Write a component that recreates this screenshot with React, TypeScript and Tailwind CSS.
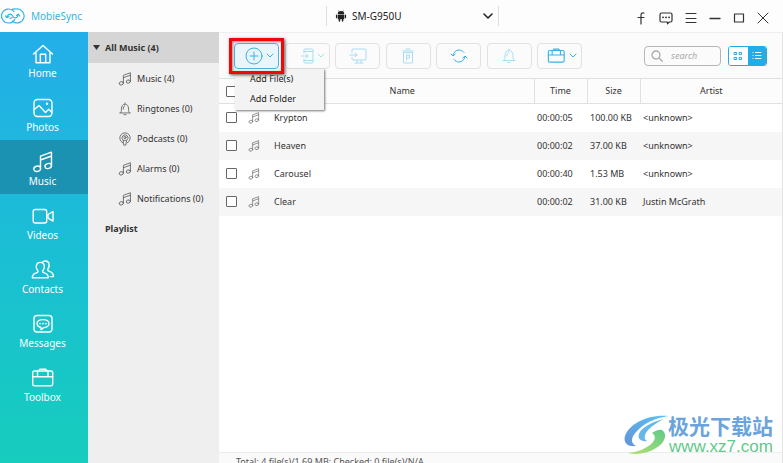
import { useState, type ReactNode } from "react";

type IconProps = { className?: string };

function Svg({
  box,
  className,
  children,
  width = 1,
}: {
  box: string;
  className?: string;
  children: ReactNode;
  width?: number;
}) {
  return (
    <svg
      viewBox={box}
      fill="none"
      stroke="currentColor"
      strokeWidth={width}
      strokeLinecap="round"
      strokeLinejoin="round"
      className={className}
      aria-hidden="true"
    >
      {children}
    </svg>
  );
}

function HomeIcon() {
  return (
    <Svg box="0 0 22 22" width={1.4} className="h-[22px] w-[22px]">
      <path d="M1.500 11 11 2.500l9.500 8.500M4 9.500v10.300h14V9.500M8.300 19.500v-8.300h5.400v8.300" />
    </Svg>
  );
}

function PhotosIcon() {
  return (
    <Svg box="0 0 22 22" width={1.4} className="h-[22px] w-[22px]">
      <rect x="2" y="2.500" width="18" height="17" rx="3.500" />
      <path d="m2.300 12.500 4.700-4 6.500 7 3.200-3.300 3 3" />
      <circle cx="15" cy="6.800" r="1.200" fill="currentColor" stroke="none" />
    </Svg>
  );
}

function MusicIcon({ className = "h-[22px] w-[22px]" }: IconProps) {
  return (
    <Svg box="0 0 22 22" width={1.4} className={className}>
      <path d="M8.500 17.300V5.200l11-4v13.500M8.500 9l11-4" />
      <ellipse cx="5.200" cy="17.800" rx="3.400" ry="2.600" transform="rotate(-15 5.200 17.800)" />
      <ellipse cx="16.200" cy="15" rx="3.300" ry="2.500" transform="rotate(-15 16.200 15)" />
    </Svg>
  );
}

function VideosIcon() {
  return (
    <Svg box="0 0 22 22" width={1.4} className="h-[22px] w-[22px]">
      <rect x="1.200" y="4.500" width="13.500" height="13.500" rx="2" />
      <path d="m16 9.500 5-3v9.600l-5-3z" />
    </Svg>
  );
}

function ContactsIcon() {
  return (
    <Svg box="0 0 24 22" width={1.4} className="h-[22px] w-[24px]">
      <path d="M6.800 11.800C4 8.500 4.900 3.400 9.300 3.400s5.400 5.100 2.500 8.400c-.7 1.300.4 1.900 2 2.400 2.400.8 3.500 2 3.500 4.600H1.300c0-2.600 1.100-3.800 3.500-4.600 1.600-.5 2.700-1.100 2-2.400Z" />
      <path d="M11.800 2.800c1-.7 2-.9 3-.8 3.600.4 4.300 4.600 2.200 7.800-.8 1.600 0 2 1.500 2.600 2.800.9 4 2.300 4 5.200h-3.300" />
    </Svg>
  );
}

function MessagesIcon() {
  return (
    <Svg box="0 0 22 22" width={1.4} className="h-[22px] w-[22px]">
      <rect x="2" y="2.500" width="18" height="16.500" rx="3" />
      <path d="M9 14.500c-2.500-.6-4-2-4-3.900 0-2.400 2.600-4 6-4s6 1.600 6 4-2.600 4-5.200 4l-2.800 2z" />
      <path d="M8 10.600h.1M11 10.600h.1M14 10.600h.1" strokeWidth={1.800} />
    </Svg>
  );
}

function ToolboxIcon({ className = "h-[22px] w-[24px]" }: IconProps) {
  return (
    <Svg box="0 0 24 22" width={1.4} className={className}>
      <rect x="1.700" y="4" width="20" height="14.700" rx="1.800" />
      <path d="M1.700 9.700h20M6.500 9.500V4.300M17 9.500V4.300M8 3.500l.8-1.200h6l.8 1.200" />
    </Svg>
  );
}

function BellIcon({ className = "h-[14px] w-[14px]" }: IconProps) {
  return (
    <Svg box="0 0 14 16" className={className}>
      <path d="M1 12.500h12M2 12.300c.8-1 .9-2 .9-4.300C2.900 4.700 4.500 2.500 7 2.500S11.100 4.700 11.100 8c0 2.300.1 3.300.9 4.300M7 2.300V1M5.800 14.500h2.400M5 8c0-2 .4-3 1.500-3.600" />
    </Svg>
  );
}

function PodcastIcon() {
  return (
    <Svg box="0 0 14 16" className="h-[14px] w-[14px]">
      <path d="M4.300 12.300a6 6 0 1 1 5.400 0" />
      <path d="M4.800 9.500a3.500 3.500 0 1 1 4.400 0" />
      <circle cx="7" cy="6.300" r="1.300" />
      <path d="M5.300 9.500h3.400L8 15H6z" />
    </Svg>
  );
}

function Chevron() {
  return (
    <Svg box="0 0 8 5" className="h-[5px] w-[8px]">
      <path d="m1 1 3 3 3-3" />
    </Svg>
  );
}

function AddIcon() {
  return (
    <Svg box="0 0 18 18" className="h-[18px] w-[18px]">
      <circle cx="9" cy="9" r="8" />
      <path d="M9 5v8M5 9h8" />
    </Svg>
  );
}

function ToDeviceIcon() {
  return (
    <Svg box="0 0 14 16" className="h-[16px] w-[14px]">
      <path d="M4 5V2q0-1 1-1h7q1 0 1 1v12q0 1-1 1H5q-1 0-1-1v-3M4 3.500h9M4 12.500h9M1 8h7M6 6l2 2-2 2" />
    </Svg>
  );
}

function ToPcIcon() {
  return (
    <Svg box="0 0 18 16" className="h-[16px] w-[18px]">
      <path d="M3 4.500V2q0-1 1-1h12q1 0 1 1v9q0 1-1 1H4q-1 0-1-1V9.500M1 7h7M6 5l2 2-2 2M8 12.200v2.600M12 12.200v2.600M6 15h8" />
    </Svg>
  );
}

function TrashIcon() {
  return (
    <Svg box="0 0 14 16" className="h-[16px] w-[14px]">
      <path d="M1.500 3h11M5 1h4M2.500 5v9q0 1 1 1h7q1 0 1-1V5zM5.500 12V7h3v3h-3" />
    </Svg>
  );
}

function RefreshIcon() {
  return (
    <Svg box="0 0 18 16" className="h-[16px] w-[18px]">
      <path d="M3 7.500C3.500 4 6 2 9 2c2 0 3.800 1 5 2.500M15 8.500C14.500 12 12 14 9 14c-2 0-3.800-1-5-2.500M1 6l2 2 2.200-2M12.800 10 15 8l2 2" />
    </Svg>
  );
}

function Logo() {
  return (
    <Svg box="0 0 24 16" width={1.2} className="h-[16px] w-[24px]">
      <path d="M13 3.600A7 7 0 1 0 8 15c2.600 0 4.500-1.400 5.600-3.400" />
      <path d="M10.800 1.600C12 1 13.500.8 15 1a7 7 0 1 1-3.500 12.200" />
      <path d="M6 9.500C6.500 7 8 5.800 9.800 6.200s2 3.500 4 3.700c1.700.1 3-1.200 3.400-3.400" />
      <path d="m4.500 8 1.500 1.700L8 8.500M15.500 7.500l1.800-1.300L18.700 8M9 10.500l2-1" />
    </Svg>
  );
}

function AndroidIcon() {
  return (
    <svg viewBox="0 0 12 13" fill="currentColor" className="h-[12px] w-[12px]" aria-hidden="true">
      <path d="M2.500 4.200a3.500 3 0 0 1 7 0zM2.500 4.800h7v5.200h-1v2q0 .8-.8.8t-.8-.8v-2H5.100v2q0 .8-.8.8t-.8-.8v-2h-1zM.5 5.300q0-.5.700-.5t.7.500v3q0 .6-.7.600t-.7-.6zM10.100 5.300q0-.5.700-.5t.7.500v3q0 .6-.7.600t-.7-.6z" />
      <path d="m3.300.4 1 1.600M8.700.4l-1 1.600" stroke="currentColor" strokeWidth=".6" />
    </svg>
  );
}

const NAV = [
  { label: "Home", icon: <HomeIcon /> },
  { label: "Photos", icon: <PhotosIcon /> },
  { label: "Music", icon: <MusicIcon />, active: true },
  { label: "Videos", icon: <VideosIcon /> },
  { label: "Contacts", icon: <ContactsIcon /> },
  { label: "Messages", icon: <MessagesIcon /> },
  { label: "Toolbox", icon: <ToolboxIcon /> },
];

const noteIcon = <MusicIcon className="h-[14px] w-[14px]" />;

const CATEGORIES = [
  { label: "Music (4)", icon: noteIcon },
  { label: "Ringtones (0)", icon: <BellIcon /> },
  { label: "Podcasts (0)", icon: <PodcastIcon /> },
  { label: "Alarms (0)", icon: noteIcon },
  { label: "Notifications (0)", icon: noteIcon },
];

const SONGS = [
  { name: "Krypton", time: "00:00:05", size: "100.00 KB", artist: "<unknown>" },
  { name: "Heaven", time: "00:00:02", size: "37.00 KB", artist: "<unknown>" },
  { name: "Carousel", time: "00:00:40", size: "1.53 MB", artist: "<unknown>" },
  { name: "Clear", time: "00:00:02", size: "31.00 KB", artist: "Justin McGrath" },
];

function TopBar() {
  return (
    <header className="flex h-8 shrink-0 items-center bg-[#fdfdfd]">
      <div className="flex w-[326px] items-center gap-[6px] pl-px text-[#35b3e6]">
        <Logo />
        <span className="text-[10px]">MobieSync</span>
      </div>
      <div className="relative h-5 w-[173px] border-x border-[#dedede] text-[#222]">
        <span className="pointer-events-none absolute left-[8px] top-[4px]">
          <AndroidIcon />
        </span>
        <select
          aria-label="Device"
          className="block h-5 w-full appearance-none bg-transparent pl-[25px] text-[10px] leading-5 outline-none"
        >
          <option>SM-G950U</option>
        </select>
        <span className="pointer-events-none absolute right-[5px] top-[7px]">
          <Svg box="0 0 10 6" width={1.6} className="h-[6px] w-[10px]">
            <path d="m1 1 4 4 4-4" />
          </Svg>
        </span>
      </div>
      <div className="ml-auto flex items-center gap-3 pr-[14px] pt-1 text-[#333]">
        <button type="button" aria-label="Facebook">
          <Svg box="0 0 12 14" width={1.2} className="h-[14px] w-[12px]">
            <path d="M9 2C6.800 1.500 6 2.500 6 4.300V13M3 6.500h6" />
          </Svg>
        </button>
        <button type="button" aria-label="Feedback">
          <Svg box="0 0 14 14" width={1.2} className="h-[14px] w-[14px]">
            <path d="M2.500 2h9q1.500 0 1.500 1.500v6q0 1.500-1.500 1.500h-1.300l-1.700 1.800L8.300 11H2.500Q1 11 1 9.500v-6Q1 2 2.500 2Z" />
            <path d="M4 6.300h.1M7 6.300h.1M10 6.300h.1" strokeWidth={1.800} />
          </Svg>
        </button>
        <button type="button" aria-label="Menu">
          <Svg box="0 0 12 14" className="h-[14px] w-[12px]">
            <path d="M1 2.500h10M1 7.500h10M1 11.500h10" />
          </Svg>
        </button>
        <button type="button" aria-label="Minimize">
          <Svg box="0 0 12 14" width={1.3} className="h-[14px] w-[12px]">
            <path d="M1 7.500h10" />
          </Svg>
        </button>
        <button type="button" aria-label="Maximize">
          <Svg box="0 0 12 14" width={1.2} className="h-[14px] w-[12px]">
            <rect x="1.500" y="3" width="9" height="8" />
          </Svg>
        </button>
        <button type="button" aria-label="Close">
          <Svg box="0 0 12 14" className="h-[14px] w-[12px]">
            <path d="m1 2 10 10M11 2 1 12" />
          </Svg>
        </button>
      </div>
    </header>
  );
}

function SideNav() {
  return (
    <nav className="flex w-[88px] shrink-0 flex-col bg-linear-to-b from-[#24aee9] to-[#17cdbd] text-white">
      {NAV.map((item) => (
        <a
          key={item.label}
          href="#"
          className={`flex h-[54px] flex-col items-center pr-[3px] pt-[11px] ${
            item.active ? "bg-[#1c92b2]" : ""
          }`}
        >
          {item.icon}
          <span className="text-[10px] leading-4">{item.label}</span>
        </a>
      ))}
    </nav>
  );
}

function CategoryPanel() {
  return (
    <aside className="w-[131px] shrink-0 bg-[#efefef] text-[9px] text-[#333]">
      <button
        type="button"
        className="mb-px flex h-[31px] w-full items-center gap-[5px] bg-[#d5d5d5] pl-[5px] font-bold"
      >
        <svg viewBox="0 0 7 5" className="h-[5px] w-[7px]" fill="currentColor" aria-hidden="true">
          <path d="M0 0h7L3.500 5z" />
        </svg>
        All Music (4)
      </button>
      <ul>
        {CATEGORIES.map((c) => (
          <li key={c.label}>
            <a href="#" className="flex h-[30px] items-center gap-[5px] pl-[30px]">
              <span className="text-[#666]">{c.icon}</span>
              {c.label}
            </a>
          </li>
        ))}
      </ul>
      <h2 className="flex h-[30px] items-center pl-[17px] font-bold">Playlist</h2>
    </aside>
  );
}

function ToolButton({
  label,
  faded,
  menu,
  children,
}: {
  label: string;
  faded?: boolean;
  menu?: boolean;
  children: ReactNode;
}) {
  return (
    <button
      type="button"
      aria-label={label}
      className={`flex h-[26px] w-[45px] items-center rounded-[4px] border border-[#e2e2e2] ${
        menu ? "justify-end gap-[3px] pr-1" : "justify-center"
      } ${faded ? "text-[#a9dcf3]" : "text-[#35b3e6]"}`}
    >
      {children}
      {menu && <Chevron />}
    </button>
  );
}

function AddButton() {
  return (
    <div className="relative z-10">
      <div className="absolute left-px top-[26px] w-[89px] bg-[#f3f3f3] pb-px pl-[15px] text-[9px] text-[#222] shadow-[1px_1px_2px_#777]">
        <button type="button" className="block h-5 w-full text-left">
          Add File(s)
        </button>
        <button type="button" className="block h-5 w-full text-left">
          Add Folder
        </button>
      </div>
      <button
        type="button"
        aria-label="Add"
        className="relative flex h-[26px] w-[45px] items-center justify-end gap-[3px] rounded-[4px] border border-[#49b4e0] bg-[#eaf5fb] pr-1 text-[#35b3e6]"
      >
        <AddIcon />
        <Chevron />
      </button>
      <span className="pointer-events-none absolute -inset-[5px] border-3 border-[#f00808] shadow-[1px_1px_3px_#555,inset_1px_1px_3px_#888]" />
    </div>
  );
}

function Toolbar() {
  return (
    <div className="flex h-[46px] shrink-0 items-center justify-between border-t border-[#efefef] bg-[#fbfbfb] px-[15px]">
      <div className="flex w-[348px] justify-between">
        <AddButton />
        <ToolButton label="Export to device" faded menu>
          <ToDeviceIcon />
        </ToolButton>
        <ToolButton label="Export to PC" faded>
          <ToPcIcon />
        </ToolButton>
        <ToolButton label="Delete" faded>
          <TrashIcon />
        </ToolButton>
        <ToolButton label="Refresh">
          <RefreshIcon />
        </ToolButton>
        <ToolButton label="Ringtone maker" faded>
          <BellIcon className="h-[16px] w-[14px]" />
        </ToolButton>
        <ToolButton label="Tools" menu>
          <ToolboxIcon className="h-[18px] w-[19px]" />
        </ToolButton>
      </div>
      <div className="flex items-center gap-[7px]">
        <label className="flex h-5 w-[77px] items-center gap-2 rounded-[4px] border border-[#b5b5b5] pl-[6px] text-[#aaa]">
          <Svg box="0 0 12 12" width={1.3} className="h-3 w-3 shrink-0">
            <circle cx="5" cy="5" r="4" />
            <path d="m8 8 3.300 3.300" />
          </Svg>
          <input
            type="text"
            placeholder="search"
            aria-label="Search"
            className="w-full min-w-0 bg-transparent text-[9px] italic outline-none placeholder:text-[#aaa]"
          />
        </label>
        <div className="flex h-5 w-[39px] overflow-hidden rounded-[3px] border border-[#22ade8]">
          <button
            type="button"
            aria-label="Grid view"
            className="flex flex-1 items-center justify-center bg-white text-[#22ade8]"
          >
            <Svg box="0 0 10 10" className="h-[10px] w-[10px]">
              <path d="M1.500 1.500h2v2h-2zM6.500 1.500h2v2h-2zM1.500 6.500h2v2h-2zM6.500 6.500h2v2h-2z" />
            </Svg>
          </button>
          <button
            type="button"
            aria-label="List view"
            className="flex flex-1 items-center justify-center bg-[#22ade8] text-white"
          >
            <Svg box="0 0 10 9" className="h-[9px] w-[10px]">
              <path d="M3.500 1.500H9M3.500 4.500H9M3.500 7.500H9M1 1.500h.1M1 4.500h.1M1 7.500h.1" />
            </Svg>
          </button>
        </div>
      </div>
    </div>
  );
}

const checkboxClass =
  "block h-[11px] w-[11px] appearance-none rounded-[1px] border border-[#666] bg-white checked:bg-[#22ade8]";

function SongTable() {
  const [checked, setChecked] = useState<string[]>([]);

  const toggle = (name: string) =>
    setChecked((prev) =>
      prev.includes(name) ? prev.filter((n) => n !== name) : [...prev, name]
    );

  return (
    <table className="w-full table-fixed text-left text-[9px] text-[#333]">
      <colgroup>
        <col className="w-[29px]" />
        <col className="w-[23px]" />
        <col />
        <col className="w-[53px]" />
        <col className="w-[53px]" />
        <col className="w-[142px]" />
      </colgroup>
      <thead>
        <tr className="h-[25px] border-y border-[#e0e0e0] bg-[#fcfcfc] text-center">
          <th className="pl-[7px]">
            <input
              type="checkbox"
              aria-label="Select all"
              className={checkboxClass}
              checked={checked.length === SONGS.length}
              onChange={(e) => setChecked(e.target.checked ? SONGS.map((s) => s.name) : [])}
            />
          </th>
          <th />
          <th className="font-normal">Name</th>
          <th className="border-l border-[#e0e0e0] font-normal">Time</th>
          <th className="border-l border-[#e0e0e0] font-normal">Size</th>
          <th className="border-l border-[#e0e0e0] font-normal">Artist</th>
        </tr>
      </thead>
      <tbody>
        {SONGS.map((song) => (
          <tr key={song.name} className="h-7 whitespace-nowrap even:bg-[#f6f6f6]">
            <td className="pl-[7px]">
              <input
                type="checkbox"
                aria-label={song.name}
                className={checkboxClass}
                checked={checked.includes(song.name)}
                onChange={() => toggle(song.name)}
              />
            </td>
            <td className="text-[#777]">
              <MusicIcon className="h-[12px] w-[12px]" />
            </td>
            <td className="pl-[3px]">{song.name}</td>
            <td className="pl-[3px]">{song.time}</td>
            <td className="pl-[3px]">{song.size}</td>
            <td className="pl-[3px]">{song.artist}</td>
          </tr>
        ))}
      </tbody>
    </table>
  );
}

function Watermark() {
  return (
    <div className="pointer-events-none absolute bottom-[6px] right-[10px] flex items-center">
      <svg viewBox="0 0 44 42" className="h-[42px] w-[44px]" aria-hidden="true">
        <defs>
          <linearGradient id="swoosh" x1="1" y1="0" x2="0" y2="1">
            <stop offset="0" stopColor="#5cc3f2" />
            <stop offset="1" stopColor="#6294d8" />
          </linearGradient>
          <linearGradient id="leaf" x1="1" y1="0" x2="0" y2="1">
            <stop offset="0" stopColor="#5fc98a" />
            <stop offset="1" stopColor="#b9e070" />
          </linearGradient>
        </defs>
        <path d="M44 2C24 0 5 10 1 22c-2 7 3 11 11 10-6-3-5-9 1-15C20 9 32 4 44 2Z" fill="url(#swoosh)" />
        <path d="M40 5C27 8 17 14 15 20c-2 5 3 8 8 7-2-1-3-3-2-6C23 15 32 9 40 5Z" fill="#66b8e8" />
        <path d="M38 16c6 4 3 13-6 18-9 6-20 7-28 5 10-1 20-5 25-11 3-4 2-7-1-9 3-2 7-4 10-3Z" fill="url(#leaf)" />
      </svg>
      <div className="flex flex-col">
        <span className="font-['Noto_Sans_CJK_SC',sans-serif] text-[21px] font-bold leading-6 text-[#6ba4dc]">
          极光下载站
        </span>
        <span className="pl-px font-['Liberation_Sans',sans-serif] text-[17px] leading-5 text-[#62c98a]">
          www.xz7.com
        </span>
      </div>
    </div>
  );
}

export default function App() {
  return (
    <div className="relative flex h-screen flex-col overflow-hidden bg-white font-['Noto_Sans',sans-serif]">
      <TopBar />
      <div className="flex min-h-0 flex-1">
        <SideNav />
        <CategoryPanel />
        <main className="flex min-w-0 flex-1 flex-col border-r border-[#e4e4e4]">
          <Toolbar />
          <div className="flex-1">
            <SongTable />
          </div>
          <footer className="h-[11px] shrink-0 overflow-hidden border-t border-[#ececec] bg-[#fafafa] pl-[17px] pt-px text-[9px] leading-4 text-[#555]">
            Total: 4 file(s)/1.69 MB; Checked: 0 file(s)/N/A
          </footer>
        </main>
      </div>
      <Watermark />
    </div>
  );
}
